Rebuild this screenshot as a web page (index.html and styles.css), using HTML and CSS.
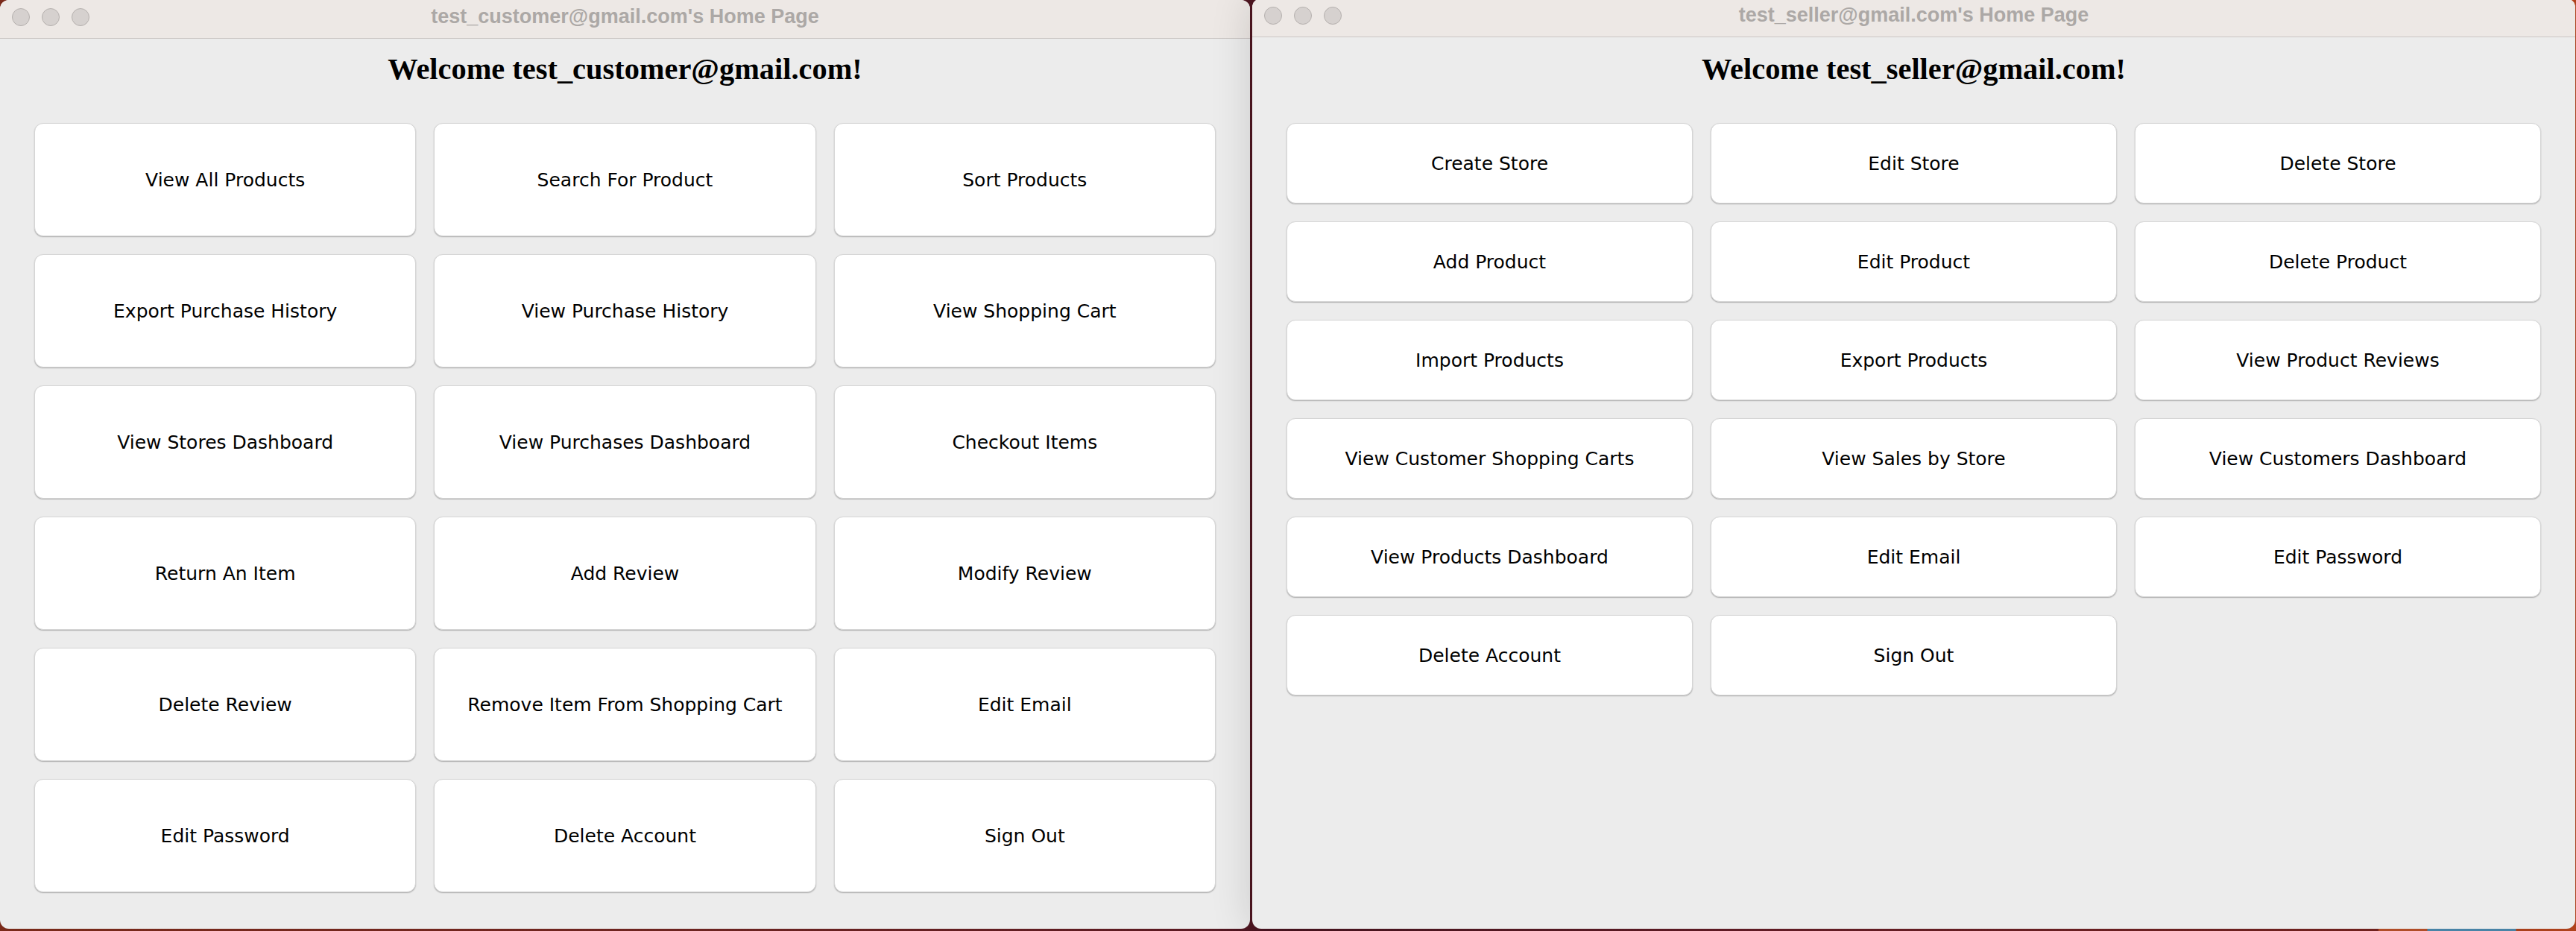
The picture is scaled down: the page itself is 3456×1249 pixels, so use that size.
FILE: index.html
```html
<!DOCTYPE html>
<html lang="en">
<head>
<meta charset="utf-8">
<title>Home Pages</title>
<link rel="stylesheet" href="styles.css">
</head>
<body>
<div class="desktop">
  <section class="window win-customer">
    <header class="titlebar">
      <div class="lights"><span class="light"></span><span class="light"></span><span class="light"></span></div>
      <div class="title">test_customer@gmail.com's Home Page</div>
      <div class="spacer"></div>
    </header>
    <main class="content">
      <h1 class="welcome">Welcome test_customer@gmail.com!</h1>
      <div class="grid grid-customer">
        <button class="btn">View All Products</button>
        <button class="btn">Search For Product</button>
        <button class="btn">Sort Products</button>
        <button class="btn">Export Purchase History</button>
        <button class="btn">View Purchase History</button>
        <button class="btn">View Shopping Cart</button>
        <button class="btn">View Stores Dashboard</button>
        <button class="btn">View Purchases Dashboard</button>
        <button class="btn">Checkout Items</button>
        <button class="btn">Return An Item</button>
        <button class="btn">Add Review</button>
        <button class="btn">Modify Review</button>
        <button class="btn">Delete Review</button>
        <button class="btn">Remove Item From Shopping Cart</button>
        <button class="btn">Edit Email</button>
        <button class="btn">Edit Password</button>
        <button class="btn">Delete Account</button>
        <button class="btn">Sign Out</button>
      </div>
    </main>
  </section>

  <section class="window win-seller">
    <header class="titlebar">
      <div class="lights"><span class="light"></span><span class="light"></span><span class="light"></span></div>
      <div class="title">test_seller@gmail.com's Home Page</div>
      <div class="spacer"></div>
    </header>
    <main class="content content-seller">
      <h1 class="welcome">Welcome test_seller@gmail.com!</h1>
      <div class="grid grid-seller">
        <button class="btn">Create Store</button>
        <button class="btn">Edit Store</button>
        <button class="btn">Delete Store</button>
        <button class="btn">Add Product</button>
        <button class="btn">Edit Product</button>
        <button class="btn">Delete Product</button>
        <button class="btn">Import Products</button>
        <button class="btn">Export Products</button>
        <button class="btn">View Product Reviews</button>
        <button class="btn">View Customer Shopping Carts</button>
        <button class="btn">View Sales by Store</button>
        <button class="btn">View Customers Dashboard</button>
        <button class="btn">View Products Dashboard</button>
        <button class="btn">Edit Email</button>
        <button class="btn">Edit Password</button>
        <button class="btn">Delete Account</button>
        <button class="btn">Sign Out</button>
      </div>
    </main>
  </section>
</div>
</body>
</html>
```

FILE: styles.css
```css
html, body {
  margin: 0;
  padding: 0;
}

body {
  width: 3456px;
  height: 1249px;
  overflow: hidden;
  font-family: "DejaVu Sans", "Liberation Sans", sans-serif;
  background: linear-gradient(to right,
    #7a2a1a 0px, #6e2420 900px, #5c1a22 1600px, #4a1420 1700px,
    #6a1f28 2400px, #7a2420 3190px, #c0542c 3192px, #c0542c 3256px,
    #4f8fb5 3257px, #4f8fb5 3375px, #b8461f 3376px, #b8461f 3456px);
}

.desktop {
  position: relative;
  width: 3456px;
  height: 1249px;
}

/* windows on the desktop canvas */
.window {
  position: absolute;
  display: flex;
  flex-direction: column;
  background: #ececec;
  border-radius: 12px;
  overflow: hidden;
}

.win-customer {
  left: 0;
  top: 0;
  width: 1677px;
  height: 1246px;
}

.win-seller {
  left: 1680px;
  top: -2px;
  width: 1775px;
  height: 1248px;
  z-index: 2;
  box-shadow: 0 0 55px rgba(0, 0, 0, 0.16);
}

.titlebar {
  flex: 0 0 auto;
  height: 51px;
  background: #ede8e5;
  border-bottom: 1px solid #cbc6c4;
  display: grid;
  grid-template-columns: 1fr auto 1fr;
  align-items: start;
}

.lights {
  display: flex;
  gap: 16px;
  padding: 11px 0 0 16px;
}

.light {
  width: 22px;
  height: 22px;
  border-radius: 50%;
  background: #d6d1cf;
  border: 1px solid #b5b0ae;
}

.title {
  font-family: "Liberation Sans", Arial, sans-serif;
  font-weight: 700;
  font-size: 27px;
  line-height: 45px;
  color: #aca8a6;
  white-space: nowrap;
}

.content {
  flex: 1 1 auto;
  padding: 18px 46px 0 46px;
  display: flex;
  flex-direction: column;
}

.content-seller {
  padding-top: 20px;
}

.welcome {
  margin: 0;
  text-align: center;
  font-family: "Liberation Serif", "Times New Roman", serif;
  font-weight: 700;
  font-size: 40.4px;
  line-height: 46px;
  color: #000;
}

.grid {
  margin-top: 49px;
  display: grid;
  grid-template-columns: repeat(3, 1fr);
  column-gap: 24px;
  row-gap: 24px;
}

.grid-customer {
  grid-auto-rows: 152px;
}

.grid-seller {
  grid-auto-rows: 108px;
}

.btn {
  margin: 0;
  padding: 0;
  display: flex;
  align-items: center;
  justify-content: center;
  background: #ffffff;
  border: 1px solid #d5d5d5;
  border-radius: 12px;
  box-shadow: 0 1px 1.5px rgba(0, 0, 0, 0.28);
  font-family: "DejaVu Sans", "Liberation Sans", sans-serif;
  font-size: 25px;
  color: #000;
  white-space: nowrap;
}
```
